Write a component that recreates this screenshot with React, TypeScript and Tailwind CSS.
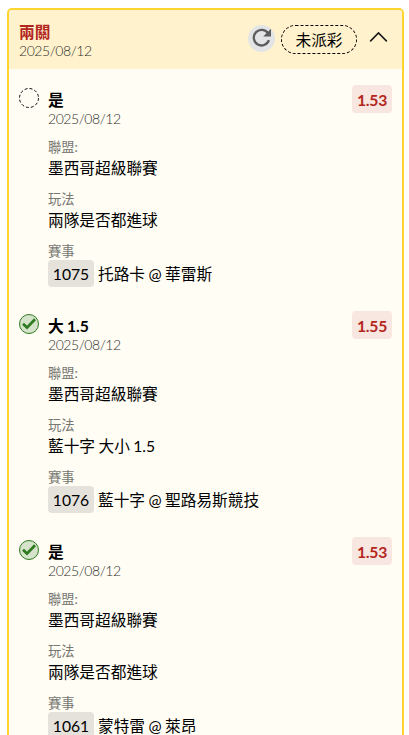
interface Leg {
  pick: string;
  date: string;
  odds: string;
  won: boolean;
  league: string;
  market: string;
  matchNo: string;
  match: string;
}

const legs: Leg[] = [
  {
    pick: "是",
    date: "2025/08/12",
    odds: "1.53",
    won: false,
    league: "墨西哥超級聯賽",
    market: "兩隊是否都進球",
    matchNo: "1075",
    match: "托路卡 @ 華雷斯",
  },
  {
    pick: "大 1.5",
    date: "2025/08/12",
    odds: "1.55",
    won: true,
    league: "墨西哥超級聯賽",
    market: "藍十字 大小 1.5",
    matchNo: "1076",
    match: "藍十字 @ 聖路易斯競技",
  },
  {
    pick: "是",
    date: "2025/08/12",
    odds: "1.53",
    won: true,
    league: "墨西哥超級聯賽",
    market: "兩隊是否都進球",
    matchNo: "1061",
    match: "蒙特雷 @ 萊昂",
  },
];

function StatusIcon({ won }: { won: boolean }) {
  if (!won) {
    return (
      <svg className="h-5 w-5" viewBox="0 0 20 20" fill="none">
        <circle cx="10" cy="10" r="9.5" stroke="#111" strokeWidth="1" strokeDasharray="3 2" />
      </svg>
    );
  }
  return (
    <svg className="h-5 w-5" viewBox="0 0 20 20" fill="none">
      <circle cx="10" cy="10" r="9.5" fill="#d5e3cb" stroke="#2d7a1f" strokeWidth="1" />
      <path d="M4 9.8 L8 13.6 L16 5.2" stroke="#2d7a1f" strokeWidth="2.7" />
    </svg>
  );
}

function DateText({ value }: { value: string }) {
  return (
    <p className="h-[14px] text-sm leading-[14px] font-light tracking-[-0.45px] text-[#30302d]">{value}</p>
  );
}

function Field({ label, children }: { label: string; children: React.ReactNode }) {
  return (
    <div>
      <p className="h-[18px] text-[13.3px] leading-[18px] text-[#777772]">{label}</p>
      {children}
    </div>
  );
}

function LegRow({ leg }: { leg: Leg }) {
  return (
    <div className="flex h-[226px] px-[10px] pt-4">
      <div className="w-[29px] shrink-0 pt-[3px]">
        <StatusIcon won={leg.won} />
      </div>
      <div className="flex-1 pt-[3px]">
        <p className="h-6 leading-6 font-bold">{leg.pick}</p>
        <DateText value={leg.date} />
        <div className="mt-3 flex flex-col gap-[10px]">
          <Field label="聯盟:">
            <p className="h-6 leading-6">{leg.league}</p>
          </Field>
          <Field label="玩法">
            <p className="h-6 leading-6">{leg.market}</p>
          </Field>
          <Field label="賽事">
            <div className="flex h-[27px] items-center gap-1 leading-7">
              <span className="h-[27px] w-[46px] rounded bg-[#e5e2dc] text-center">{leg.matchNo}</span>
              <span className="h-[27px]">{leg.match}</span>
            </div>
          </Field>
        </div>
      </div>
      <span className="flex h-7 w-10 items-center justify-center rounded bg-[#f7e7e0] pt-1 font-bold tracking-[-0.2px] text-[#b3261e]">
        {leg.odds}
      </span>
    </div>
  );
}

export default function App() {
  return (
    <div className="h-[735px] overflow-hidden bg-white pt-2 pl-[7px] font-['Lato','Noto_Sans_CJK_TC',sans-serif] text-[15.7px] [word-spacing:-0.6px] text-black">
      <div className="w-[397px] rounded-[5px] border-2 border-[#ffd42e] bg-[#fffdf4]">
        <div className="flex h-[59px] items-start justify-between rounded-t-[3px] bg-[#fff2cc] pl-[10px]">
          <div className="pt-[10px]">
            <p className="h-6 leading-6 font-bold text-[#b3261e]">兩關</p>
            <DateText value="2025/08/12" />
          </div>
          <div className="flex items-start pt-[15px] pr-[14px]">
            <button className="mr-[6px] flex h-[27px] w-[27px] items-center justify-center rounded-full bg-[#e3e4e6]" aria-label="refresh">
              <svg className="h-[27px] w-[27px]" viewBox="0 0 27 27" fill="none">
                <path d="M20.2 8.6 A7.8 7.8 0 1 0 20.9 15.2" stroke="#5c5c5c" strokeWidth="2.3" />
                <path d="M23 3.8 V11.6 H15.2 Z" fill="#5c5c5c" />
              </svg>
            </button>
            <span className="flex h-[29px] w-[76px] items-center justify-center rounded-full border border-dashed border-black pt-[2px]">
              未派彩
            </span>
            <svg className="mt-[6px] ml-3 h-3 w-[19px]" viewBox="0 0 19 12" fill="none">
              <path d="M1.2 10.4 L9.5 2 L17.8 10.4" stroke="#1a1a1a" strokeWidth="1.6" />
            </svg>
          </div>
        </div>

        {/* ставки */}
        {legs.map((leg) => (
          <LegRow key={leg.matchNo} leg={leg} />
        ))}
      </div>
    </div>
  );
}
